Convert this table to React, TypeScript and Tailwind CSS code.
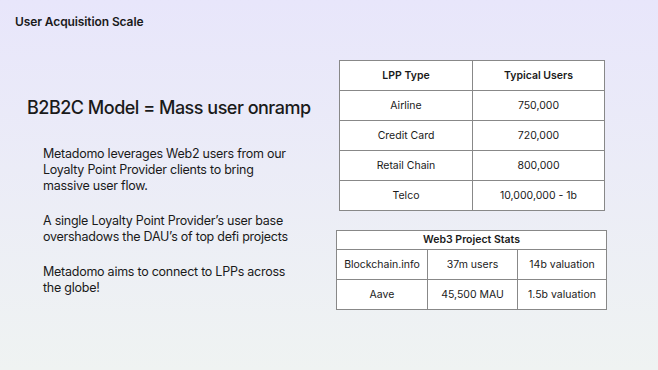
import React from 'react';

const lpp = [
  ['Airline', '750,000'],
  ['Credit Card', '720,000'],
  ['Retail Chain', '800,000'],
  ['Telco', '10,000,000 - 1b'],
];

const web3 = [
  ['Blockchain.info', '37m users', '14b valuation'],
  ['Aave', '45,500 MAU', '1.5b valuation'],
];

export default function App() {
  return (
    <div
      className="w-[658px] h-[370px] overflow-hidden bg-gradient-to-b from-[#e8e6fb] to-[#eff3f2] text-[#1a1a1a]"
      style={{ fontFamily: 'Inter, "Noto Sans", sans-serif' }}
    >
      <div className="pt-[13px] pl-[15px] text-[12px] font-semibold leading-[18px] tracking-[-0.1px]">User Acquisition Scale</div>
      <div className="flex">
        <div className="w-[330px] shrink-0">
          <h1 className="mt-[65px] pl-[27px] text-[18px] font-medium leading-[24px] tracking-[-0.5px] whitespace-nowrap">
            B2B2C Model = Mass user onramp
          </h1>
          <div className="mt-[26px] pl-[43px] text-[12.5px] leading-[16px] tracking-[-0.25px] whitespace-nowrap flex flex-col gap-[19px]">
            <p>Metadomo leverages Web2 users from our<br />Loyalty Point Provider clients to bring<br />massive user flow.</p>
            <p>A single Loyalty Point Provider’s user base<br />overshadows the DAU’s of top defi projects</p>
            <p>Metadomo aims to connect to LPPs across<br />the globe!</p>
          </div>
        </div>
        <div className="flex flex-col pt-[29px]">
          <table className="ml-[9px] w-[266px] border-collapse bg-white text-[10.5px] text-center">
            <thead>
              <tr className="h-[30px]">
                <th className="w-[133px] border border-[#888] font-semibold">LPP Type</th>
                <th className="border border-[#888] font-semibold">Typical Users</th>
              </tr>
            </thead>
            <tbody>
              {lpp.map(([a, b]) => (
                <tr key={a} className="h-[30px]">
                  <td className="border border-[#888]">{a}</td>
                  <td className="border border-[#888]">{b}</td>
                </tr>
              ))}
            </tbody>
          </table>
          <table className="mt-[19px] ml-[6px] w-[271px] border-collapse bg-white text-[10.5px] text-center">
            <thead>
              <tr className="h-[19px]">
                <th colSpan={3} className="border border-[#888] font-semibold">Web3 Project Stats</th>
              </tr>
            </thead>
            <tbody>
              {web3.map(([a, b, c]) => (
                <tr key={a} className="h-[30px]">
                  <td className="w-[91px] border border-[#888]">{a}</td>
                  <td className="w-[90px] border border-[#888]">{b}</td>
                  <td className="border border-[#888]">{c}</td>
                </tr>
              ))}
            </tbody>
          </table>
        </div>
      </div>
    </div>
  );
}
